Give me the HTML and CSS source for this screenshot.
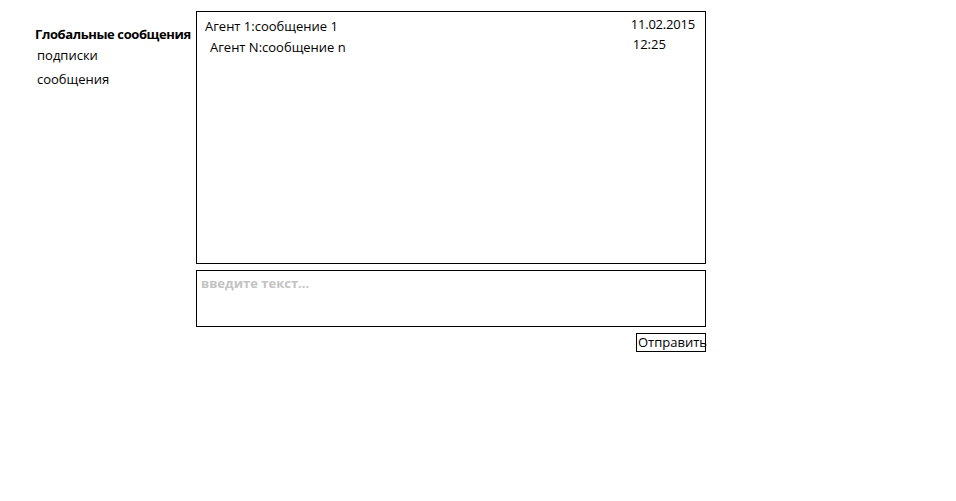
FILE: index.html
```html
<!DOCTYPE html>
<html lang="ru">
<head>
<meta charset="utf-8">
<title>Глобальные сообщения</title>
<link rel="stylesheet" href="styles.css">
</head>
<body>
<div class="page">
  <nav class="sidebar">
    <div class="nav-title">Глобальные сообщения</div>
    <div class="nav-item nav-subs">подписки</div>
    <div class="nav-item nav-msgs">сообщения</div>
  </nav>
  <main class="chat">
    <section class="messages">
      <div class="msg-list">
        <div class="msg msg-first">Агент 1:сообщение 1</div>
        <div class="msg msg-second">Агент N:сообщение n</div>
      </div>
      <div class="stamp">
        <div class="stamp-date">11.02.2015</div>
        <div class="stamp-time">12:25</div>
      </div>
    </section>
    <div class="composer">
      <span class="placeholder">введите текст...</span>
    </div>
    <div class="actions">
      <button class="send">Отправить</button>
    </div>
  </main>
</div>
</body>
</html>
```

FILE: styles.css
```css
html, body {
  margin: 0;
  padding: 0;
  background: #fff;
}
body {
  font-family: "Open Sans", "Noto Sans", sans-serif;
  font-size: 13px;
  color: #000;
}
.page {
  display: flex;
  padding-top: 11px;
}
.sidebar {
  width: 196px;
  flex: none;
  padding-top: 14px;
  box-sizing: border-box;
}
.nav-title {
  font-weight: bold;
  padding-left: 35px;
  line-height: 18px;
  white-space: nowrap;
  letter-spacing: -0.4px;
}
.nav-item {
  padding-left: 37px;
  line-height: 18px;
}
.nav-subs { margin-top: 3px; }
.nav-msgs { margin-top: 6px; }
.chat {
  width: 510px;
  flex: none;
  display: flex;
  flex-direction: column;
}
.messages {
  height: 253px;
  border: 1px solid #000;
  box-sizing: border-box;
  display: flex;
  justify-content: space-between;
  padding: 3px 10px 0 8px;
}
.msg-list { margin-top: 2px; }
.msg { line-height: 18px; }
.msg-second { margin-top: 3px; padding-left: 5px; }
.stamp { line-height: 18px; }
.stamp-date { letter-spacing: -0.2px; }
.stamp-time { margin-top: 2px; padding-left: 2px; }
.composer {
  margin-top: 6px;
  height: 57px;
  border: 1px solid #000;
  box-sizing: border-box;
  padding: 3px 4px;
}
.placeholder {
  color: #c3c3c3;
  font-weight: bold;
  line-height: 18px;
}
.actions {
  display: flex;
  justify-content: flex-end;
  margin-top: 6px;
}
.send {
  font-family: inherit;
  font-size: 13px;
  background: #fff;
  border: 1px solid #000;
  padding: 0 1px;
  height: 19px;
  width: 70px;
  line-height: 17px;
  color: #000;
}
```
